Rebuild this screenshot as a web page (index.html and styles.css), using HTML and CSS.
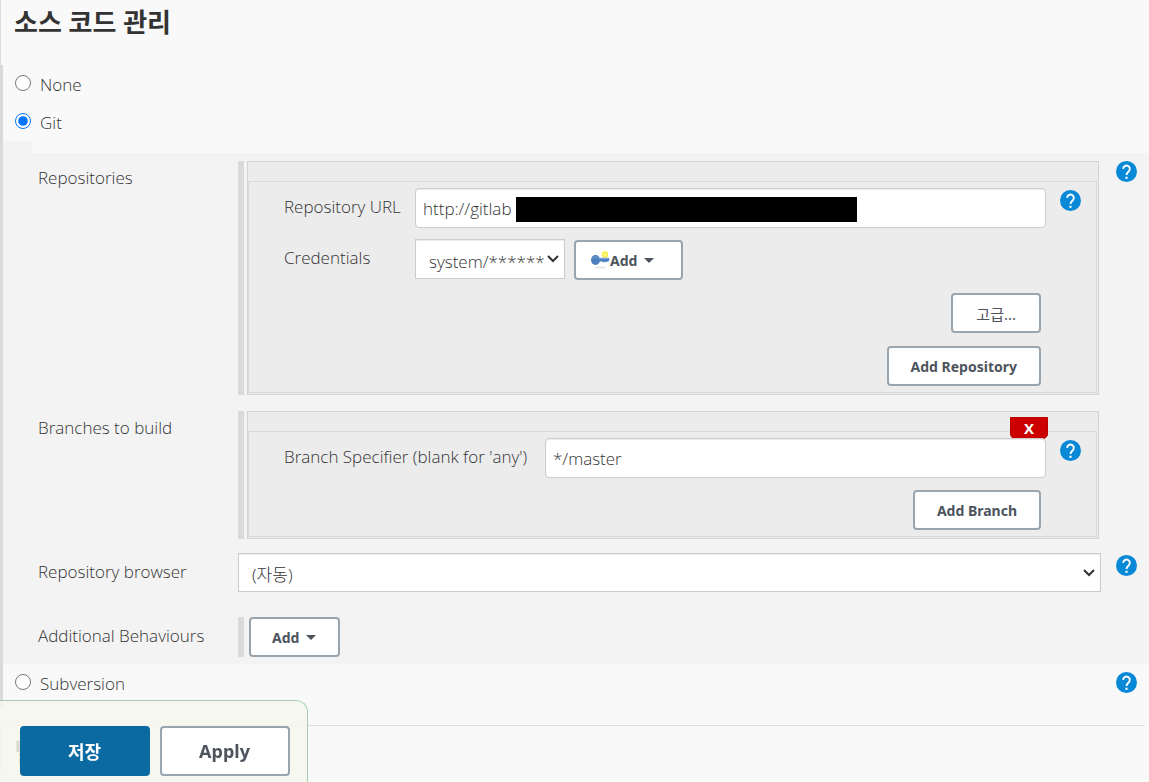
FILE: index.html
```
<!DOCTYPE html>
<html lang="ko">

<head>
    <meta charset="UTF-8">
    <meta name="viewport" content="width=device-width, initial-scale=1.0">
    <title>소스 코드 관리</title>
    <link rel="stylesheet" href="styles.css">
</head>

<body>
    <svg class="sprite" aria-hidden="true">
        <symbol id="icon-help" viewBox="0 0 24 24">
            <circle cx="12" cy="12" r="12" fill="#0789d8"/>
            <path d="M8.2 9a3.8 3.8 0 1 1 6.3 2.9c-1.6 1.4-2.5 2-2.5 4.2" fill="none" stroke="#fff" stroke-width="2.2"/>
            <rect x="10.8" y="18" width="2.4" height="2.4" fill="#fff"/>
        </symbol>
    </svg>

    <form class="config">
        <h2 class="section-title">소스 코드 관리</h2>

        <div class="scm">
            <div class="radio-row">
                <input type="radio" name="scm" id="scm-none">
                <label for="scm-none">None</label>
            </div>
            <div class="radio-row">
                <input type="radio" name="scm" id="scm-git" checked>
                <label for="scm-git">Git</label>
            </div>

            <div class="git">
                <div class="git-settings">
                    <div class="row">
                        <div class="row-label">Repositories</div>
                        <div class="repeatable">
                            <div class="chunk">
                                <div class="chunk-header"></div>
                                <div class="chunk-body">
                                    <div class="field">
                                        <label class="field-label" for="repo-url">Repository URL</label>
                                        <div class="field-input">
                                            <input type="text" class="text-input" id="repo-url" value="http://gitlab">
                                            <span class="redacted"></span>
                                        </div>
                                        <a href="#" class="help" aria-label="Help"><svg><use href="#icon-help"/></svg></a>
                                    </div>
                                    <div class="field credentials">
                                        <label class="field-label" for="credentials">Credentials</label>
                                        <select class="select" id="credentials">
                                            <option>system/******</option>
                                        </select>
                                        <button type="button" class="btn btn-key">
                                            <svg class="key" viewBox="0 0 20 18">
                                                <ellipse cx="10" cy="16.5" rx="6" ry="1" fill="#e6e6e6"/>
                                                <circle cx="15" cy="3.5" r="3.2" fill="#f8f04a"/>
                                                <circle cx="15" cy="3.5" r="1.2" fill="#fffcb0"/>
                                                <ellipse cx="5.5" cy="9" rx="4.5" ry="5" fill="#4c7fbd"/>
                                                <path d="M8 6.8h10.5l1 1.7-1 2H17l-1 1-1.5-1-1 1-1.500-1H8z" fill="#4c7fbd"/>
                                                <path d="M2.500 8c1-2.500 4-3 6-.5h10" fill="none" stroke="#7fa6d4"/>
                                            </svg>Add<span class="caret"></span>
                                        </button>
                                    </div>
                                    <div class="actions">
                                        <button type="button" class="btn btn-plain">고급...</button>
                                    </div>
                                    <div class="actions">
                                        <button type="button" class="btn">Add Repository</button>
                                    </div>
                                </div>
                            </div>
                        </div>
                        <a href="#" class="help" aria-label="Help"><svg><use href="#icon-help"/></svg></a>
                    </div>

                    <div class="row">
                        <div class="row-label">Branches to build</div>
                        <div class="repeatable">
                            <div class="chunk">
                                <div class="chunk-header"></div>
                                <button type="button" class="delete">X</button>
                                <div class="chunk-body">
                                    <div class="field">
                                        <label class="field-label field-label-wide" for="branch">Branch Specifier (blank for 'any')</label>
                                        <div class="field-input">
                                            <input type="text" class="text-input" id="branch" value="*/master">
                                        </div>
                                        <a href="#" class="help" aria-label="Help"><svg><use href="#icon-help"/></svg></a>
                                    </div>
                                    <div class="actions actions-branch">
                                        <button type="button" class="btn">Add Branch</button>
                                    </div>
                                </div>
                            </div>
                        </div>
                    </div>

                    <div class="row row-browser">
                        <label class="row-label" for="browser">Repository browser</label>
                        <select class="select" id="browser">
                            <option>(자동)</option>
                        </select>
                        <a href="#" class="help" aria-label="Help"><svg><use href="#icon-help"/></svg></a>
                    </div>

                    <div class="row row-behaviours">
                        <div class="row-label">Additional Behaviours</div>
                        <div class="repeatable">
                            <button type="button" class="btn">Add<span class="caret"></span></button>
                        </div>
                    </div>
                </div>
            </div>

            <div class="radio-row">
                <input type="radio" name="scm" id="scm-svn">
                <label for="scm-svn">Subversion</label>
                <a href="#" class="help" aria-label="Help"><svg><use href="#icon-help"/></svg></a>
            </div>
        </div>

        <h2 class="section-title next-section">빌드</h2>

        <div class="bottom-bar">
            <button type="submit" class="btn btn-large btn-primary">저장</button>
            <button type="button" class="btn btn-large">Apply</button>
        </div>
    </form>
</body>

</html>
```

FILE: styles.css
```
* {
    box-sizing: border-box;
}

body {
    margin: 0;
    background-color: #f9f9f9;
    color: #333;
    font-family: "Open Sans", "Noto Sans CJK KR", sans-serif;
    font-size: 17px;
    font-weight: 300;
    line-height: 24px;
}

input,
select,
button {
    font-family: inherit;
    font-size: inherit;
    font-weight: inherit;
    color: inherit;
}

.sprite {
    display: none;
}

.section-title {
    margin: 0;
    height: 65px;
    padding: 4px 13px;
    border-left: 1px solid #ddd;
    font-size: 26px;
    font-weight: 700;
    line-height: 36px;
}

.scm {
    border-left: 3px solid #dadada;
    padding-bottom: 5px;
}

.radio-row {
    display: flex;
    align-items: center;
    height: 38px;
    padding-left: 12px;
}

.radio-row input {
    width: 16px;
    height: 16px;
    margin: 0 9px 2px 0;
}

.radio-row label {
    padding-top: 1px;
}

.radio-row .help {
    margin: 0 12px 2px auto;
}

/* git options */
.git {
    background-color: #f3f3f3;
}

.git-settings {
    margin-left: 29px;
    padding: 8px 0 7px;
    border-top: 12px solid #f9f9f9;
}

.row {
    display: grid;
    grid-template-columns: 206px minmax(0, 1fr) 48px;
    align-items: start;
    margin-bottom: 16px;
}

.row-label {
    padding: 5px 6px 4px;
}

.row > .help {
    margin-left: 15px;
}

.row-browser {
    margin: -2px 0 25px;
}

.row-browser .row-label,
.row-behaviours .row-label {
    padding-top: 7px;
}

.row-browser .select {
    height: 39px;
}

.row-browser > .help {
    margin-top: 2px;
}

.row-behaviours {
    margin-bottom: 0;
}

.row-behaviours .btn {
    margin-left: 2px;
}

.repeatable {
    border-left: 6px solid #dadada;
    padding: 0 2px 0 3px;
}

.chunk {
    position: relative;
    padding: 0 1px 1px 0;
    border: 1px solid #d3d3d3;
    background-color: #ececec;
}

.chunk-header {
    height: 19px;
}

.chunk-body {
    padding: 6px 15px 6px 35px;
    border: 1px solid #dadada;
}

.field {
    display: flex;
    align-items: flex-start;
}

.field-label {
    flex: none;
    width: 131px;
    padding-top: 7px;
}

.field-label-wide {
    width: 261px;
}

.field-input {
    position: relative;
    flex: 1;
}

.field .help {
    margin: 2px 0 0 14px;
}

.credentials {
    margin-top: 11px;
}

.credentials .select {
    width: 150px;
}

.credentials .btn {
    margin: 1px 0 0 9px;
}

.text-input {
    display: block;
    width: 100%;
    height: 40px;
    padding: 0 7px;
    border: 1px solid #ccc;
    border-radius: 4px;
    background-color: #fff;
    box-shadow: inset 0 1px 1px rgba(0, 0, 0, 0.08);
}

.redacted {
    position: absolute;
    top: 9px;
    left: 101px;
    width: 341px;
    height: 25px;
    background-color: #000;
}

.select {
    width: 100%;
    height: 40px;
    padding: 4px 18px 0 13px;
    border: 1px solid #ccc;
    border-radius: 0;
    appearance: none;
    background: #fff url("data:image/svg+xml,%3Csvg xmlns='http://www.w3.org/2000/svg' width='12' height='8'%3E%3Cpath d='M1 1l5 5 5-5' fill='none' stroke='%23333' stroke-width='2'/%3E%3C/svg%3E") no-repeat right 5px center;
    box-shadow: inset 0 1px 1px rgba(0, 0, 0, 0.08);
}

.actions {
    display: flex;
    justify-content: flex-end;
    margin-top: 13px;
    padding-right: 40px;
}

.actions-branch {
    margin-top: 12px;
}

.help {
    flex: none;
    width: 21px;
    height: 21px;
}

.help svg {
    display: block;
    width: 21px;
    height: 21px;
}

.btn {
    display: inline-flex;
    align-items: center;
    justify-content: center;
    height: 40px;
    padding: 0 22px 0 21px;
    border: 2px solid #98a5af;
    border-radius: 4px;
    background-color: #fff;
    color: #4d545d;
    font-family: "Noto Sans", "Noto Sans CJK KR", sans-serif;
    font-size: 14px;
    font-weight: 700;
}

.actions .btn {
    padding: 0 22px;
}

.actions .btn-plain {
    padding: 0 23px;
    font-size: 15px;
    font-weight: 400;
}

.btn-key {
    padding: 0 27px 0 14px;
}

.key {
    width: 20px;
    height: 18px;
}

.caret {
    margin-left: 7px;
    border: 5px solid transparent;
    border-top-color: #4d545d;
    border-bottom: 0;
}

.delete {
    position: absolute;
    top: 5px;
    right: 50px;
    width: 38px;
    height: 22px;
    padding: 0;
    border: 1px solid #b00;
    border-radius: 0 0 5px 5px;
    background-color: #c00;
    color: #fff;
    font-size: 15px;
    font-weight: 700;
    line-height: 20px;
}

.next-section {
    height: auto;
    margin: 18px 4px 0 0;
    padding-top: 8px;
    border-top: 1px solid #ddd;
}

.bottom-bar {
    position: fixed;
    left: 0;
    bottom: 0;
    display: flex;
    gap: 10px;
    padding: 25px 17px 6px 20px;
    border: 1px solid #a3cfb9;
    border-width: 1px 1px 0 0;
    border-radius: 0 12px 0 0;
    background-color: rgba(246, 248, 238, 0.85);
}

.btn-large {
    width: 130px;
    height: 50px;
    font-size: 18px;
}

.btn-primary {
    border-color: #0b6aa2;
    background-color: #0b6aa2;
    color: #fff;
}
```
